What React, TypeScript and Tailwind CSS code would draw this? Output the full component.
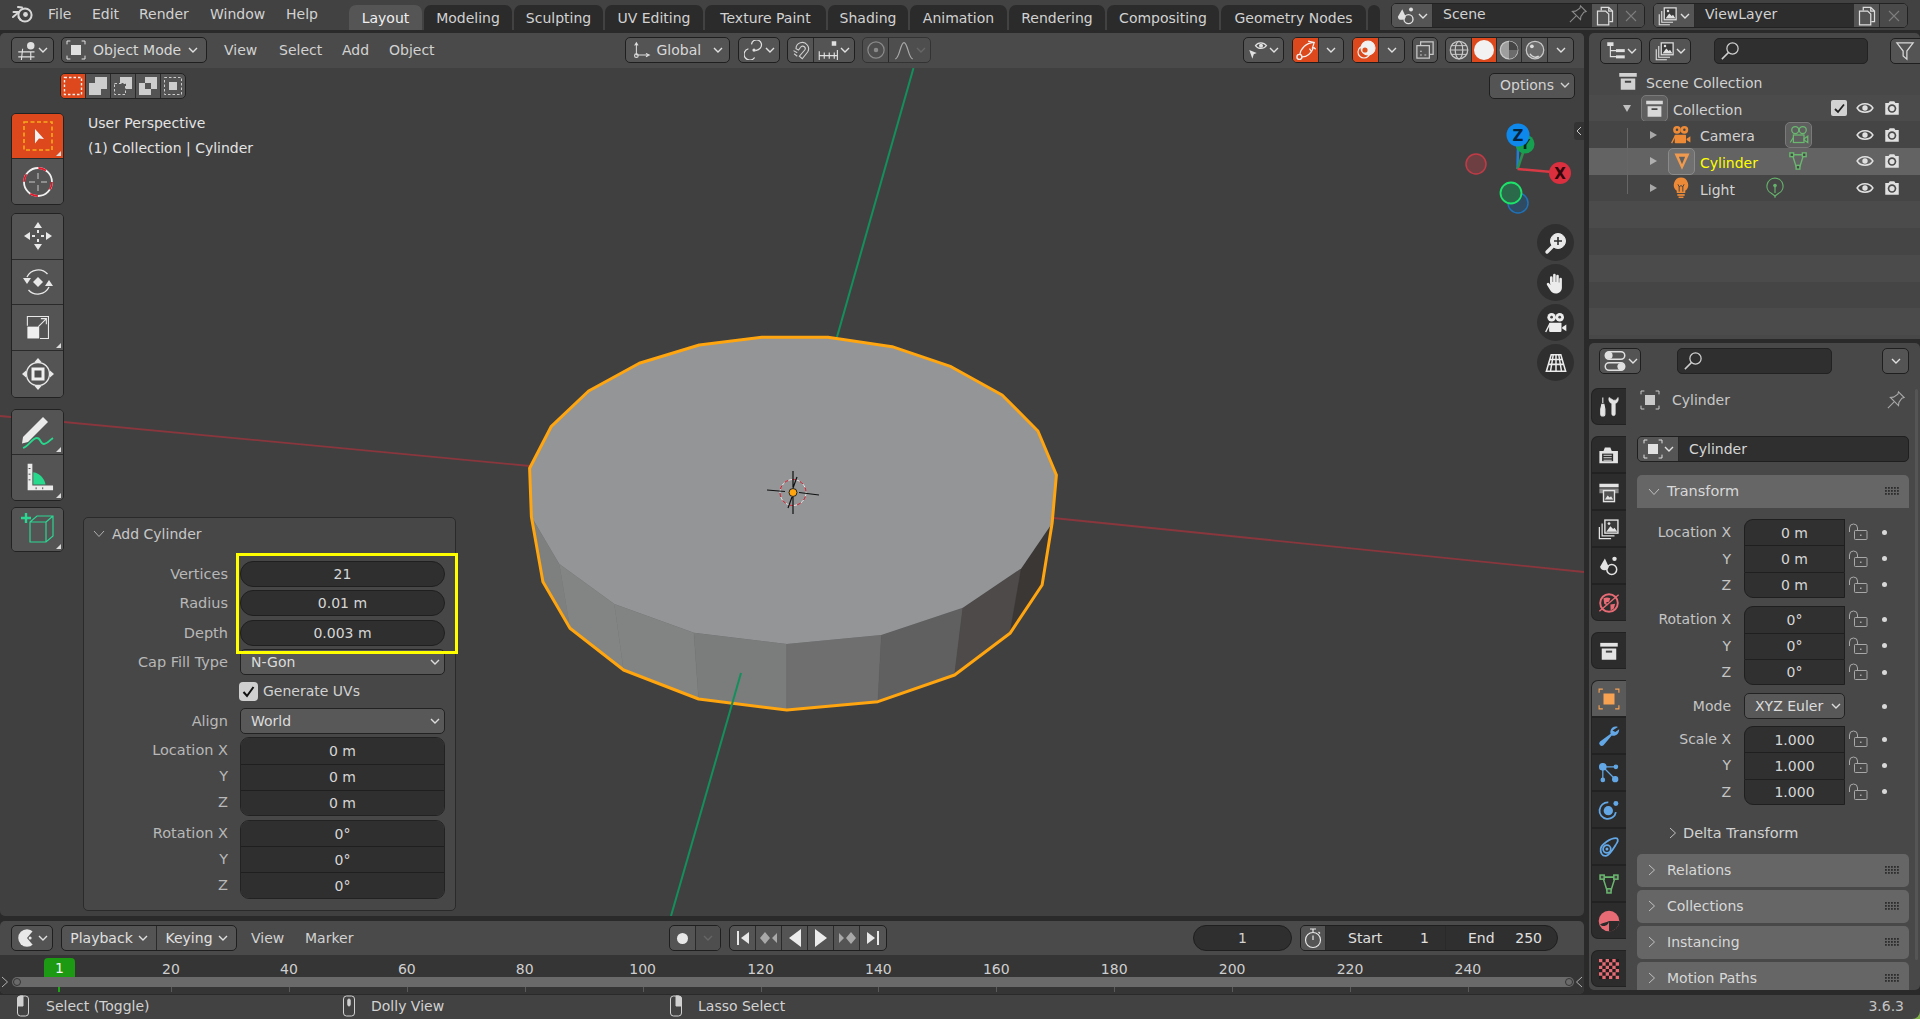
import type { ReactNode } from 'react';
import { twMerge } from 'tailwind-merge';

const cx = (...parts: (string | false | undefined)[]) => twMerge(parts.filter(Boolean).join(' '));

function Svg({ s = 16, v = 16, c, children }: { s?: number; v?: number; c?: string; children: ReactNode }) {
  return (
    <svg width={s} height={s} viewBox={`0 0 ${v} ${v}`} fill="none" stroke="currentColor" strokeWidth={1} className={cx('shrink-0', c)}>
      {children}
    </svg>
  );
}

const Chevron = ({ c }: { c?: string }) => (
  <svg width="10" height="6" viewBox="0 0 10 6" fill="none" stroke="currentColor" strokeWidth={1.4} className={cx('shrink-0', c)}>
    <path d="M1 1l4 4 4-4" />
  </svg>
);

const ChevRight = ({ c }: { c?: string }) => (
  <svg width="8" height="12" viewBox="0 0 8 12" fill="none" stroke="currentColor" strokeWidth={1} className={cx('shrink-0', c)}>
    <path d="M1 1l5.500 5L1 11" />
  </svg>
);

const ChevDown = ({ c }: { c?: string }) => (
  <svg width="12" height="8" viewBox="0 0 12 8" fill="none" stroke="currentColor" strokeWidth={1} className={cx('shrink-0', c)}>
    <path d="M1 1l5 5.500L11 1" />
  </svg>
);

const Logo = () => (
  <svg width="24" height="22" viewBox="0 0 24 22" fill="none" stroke="#d8d8d8" strokeWidth={2}>
    <circle cx="14" cy="12" r="6.600" />
    <circle cx="14.500" cy="11.500" r="2.400" fill="#d8d8d8" stroke="none" />
    <path d="M11 4.500l-4-.5M8 9L2.500 9M8 9l-6 5M7.500 14l2 3" strokeLinecap="round" />
  </svg>
);

const ObjectIcon = ({ s = 18, c }: { s?: number; c?: string }) => (
  <Svg s={s} c={c}>
    <rect x="4" y="4" width="8" height="8" fill="currentColor" stroke="none" />
    <path d="M.8 3.500V.8h2.700M12.500.8h2.700v2.700M15.200 12.500v2.700h-2.700M3.500 15.200H.8v-2.700" strokeWidth={0.8} />
  </Svg>
);

const View3DIcon = () => (
  <Svg s={20}>
    <circle cx="11" cy="4.500" r="3" fill="currentColor" stroke="none" />
    <path d="M1 9.500h13M1 13.500h13M4.500 7l-1 9M11 9v7" strokeWidth={0.9} />
  </Svg>
);

const GlobalIcon = () => (
  <Svg s={18}>
    <path d="M3 2.500v10M3 12.500h10M1.500 4L3 1.500 4.500 4M11.500 11l3 1.500-3 1.500" strokeWidth={0.9} />
    <circle cx="3" cy="13" r="1.600" />
  </Svg>
);

const PivotIcon = () => (
  <Svg s={20}>
    <circle cx="8" cy="8" r="1.300" fill="currentColor" stroke="none" />
    <path d="M3.500 7a4.600 4.600 0 1 0 5 7M6 3.500a4 4 0 1 1 7 3c-1.200 1.600-3 1.800-4 2" strokeWidth={1} />
  </Svg>
);

const MagnetIcon = () => (
  <Svg s={20}>
    <path d="M4 7a5 5 0 0 1 9-3c1.400 1.800 1.300 4 .3 5.600L9 15 6.700 13l4.300-5c.7-.9.4-2-.3-2.600-.9-.8-2.300-.7-3 .4L6 8z" strokeWidth={0.9} />
    <path d="M2 8.500l3 1.700M2.500 11L5 13" strokeWidth={0.9} />
  </Svg>
);

const IncrementIcon = () => (
  <Svg s={20}>
    <rect x="11" y="1" width="3.600" height="3.600" fill="currentColor" stroke="none" />
    <path d="M1 9v7M1 12.500h14.500M5 10v5M9 10v5M13 10v5" strokeWidth={0.9} />
    <path d="M15.500 8v8" strokeWidth={0.9} />
  </Svg>
);

const PropIcon = () => (
  <Svg s={20} c="text-[#8a8a8a]">
    <circle cx="8" cy="8" r="6.500" />
    <circle cx="8" cy="8" r="1.800" fill="currentColor" stroke="none" />
  </Svg>
);

const FalloffIcon = () => (
  <Svg s={20} c="text-[#a8a8a8]">
    <path d="M1 15c3.500 0 4-13 7-13s3.500 13 7 13" />
  </Svg>
);

const SelectableIcon = () => (
  <Svg s={20}>
    <path d="M6 4.500c2-3 6.500-3 8.800 0-2.300 3-6.800 3-8.800 0z" />
    <circle cx="10.400" cy="4.500" r="1.600" fill="currentColor" stroke="none" />
    <path d="M1 8l6 2.300-2.400 1L3.500 15z" fill="currentColor" stroke="none" />
  </Svg>
);

const GizmoToggleIcon = () => (
  <Svg s={22}>
    <path d="M3.500 11.500C4 7 8 3 13.500 2.500M9.500 1.500l4.500 1L12.500 7M5 13c3.500.2 7-2.500 8.500-7" strokeWidth={0.9} />
    <circle cx="3.200" cy="13" r="1.800" strokeWidth={1} />
    <path d="M13.500 6l1.500 1.500M12 9l-1.500-2" strokeWidth={0.9} />
  </Svg>
);

const OverlayIcon = () => (
  <svg width="22" height="22" viewBox="0 0 22 22" fill="none" stroke="#f0f0f0" strokeWidth={1.200}>
    <circle cx="13" cy="9" r="7" fill="#f0f0f0" />
    <circle cx="10" cy="11" r="2.600" fill="#e04f1a" stroke="none" />
    <circle cx="9" cy="13" r="6" />
  </svg>
);

const XRayIcon = () => (
  <Svg s={20} c="text-[#c8c8c8]">
    <rect x="1.500" y="4.500" width="10" height="10" />
    <path d="M4.500 4.500V1.500h10v10h-3" />
    <path d="M4 9h1.500M4 12h1.500M7.500 12H9" strokeWidth={0.900} />
  </Svg>
);

const WireIcon = () => (
  <Svg s={20} c="text-[#c8c8c8]">
    <circle cx="8" cy="8" r="7" />
    <ellipse cx="8" cy="8" rx="3" ry="7" />
    <path d="M1 8h14M2 4.500h12M2 11.500h12" strokeWidth={0.800} />
  </Svg>
);

const MaterialIcon = () => (
  <Svg s={20} c="text-[#c8c8c8]">
    <circle cx="8" cy="8" r="7" fill="#9e9e9e" />
    <path d="M8 1a7 7 0 0 1 7 7H8z" fill="#454545" stroke="none" />
    <path d="M8 8v7a7 7 0 0 0 7-7z" fill="#6c6c6c" stroke="none" />
  </Svg>
);

const RenderedIcon = () => (
  <Svg s={20} c="text-[#c8c8c8]">
    <circle cx="8" cy="8" r="7" fill="#6a6a6a" />
    <path d="M4 11a5 5 0 0 0 7 2" stroke="#d8d8d8" strokeWidth={1.200} />
    <circle cx="5.500" cy="5" r="1.500" fill="#dcdcdc" stroke="none" />
  </Svg>
);

const SearchIcon = () => (
  <Svg s={20} c="text-[#d0d0d0]">
    <circle cx="10" cy="6" r="4.500" />
    <path d="M6.700 9.300L1.500 14.500" strokeWidth={1.200} />
  </Svg>
);

const SceneIcon = ({ s = 22, c }: { s?: number; c?: string }) => (
  <Svg s={s} c={c}>
    <path d="M5 2.500L7.800 8.500A3 3 0 0 1 5 11 3 3 0 0 1 1.500 8.500z" fill="currentColor" stroke="none" />
    <circle cx="12" cy="2.800" r="1.600" fill="currentColor" stroke="none" />
    <circle cx="10" cy="10.500" r="3.600" strokeWidth={1.100} />
  </Svg>
);

const ViewLayerIcon = ({ s = 22, c }: { s?: number; c?: string }) => (
  <Svg s={s} c={c}>
    <rect x="5" y="1.500" width="9.500" height="9.500" fill="#3a3a3a" />
    <path d="M6 10l3-4 2 2 1-1 2 3z" fill="currentColor" stroke="none" />
    <circle cx="8" cy="4" r="1" fill="currentColor" stroke="none" />
    <path d="M3 4v9h9M1 6.500V15h8.500" strokeWidth={0.900} />
  </Svg>
);

const CopyIcon = () => (
  <Svg s={20} c="text-[#dcdcdc]">
    <path d="M5 3.500V1h6l3 3v8.500h-2.500M11 1v3h3" strokeWidth={1} />
    <path d="M2 4h6.500L11 6.500V15H2z" strokeWidth={1} />
  </Svg>
);

const CloseIcon = () => (
  <svg width="12" height="12" viewBox="0 0 12 12" stroke="#7d7d7d" strokeWidth={1.100}>
    <path d="M1 1l10 10M11 1L1 11" />
  </svg>
);

const PinIcon = ({ c }: { c?: string }) => (
  <Svg s={20} c={c}>
    <path d="M10 1.500l4.500 4.500-1.800.5-2.400 3.500L10 12.500 3.500 6l2.500-.3L9.500 3.300z" strokeWidth={0.900} />
    <path d="M6.500 9.500L1.500 14.500" strokeWidth={0.900} />
  </Svg>
);

const OutlinerTypeIcon = () => (
  <Svg s={20}>
    <rect x="1" y="1" width="5" height="3" fill="currentColor" stroke="none" />
    <rect x="8" y="6.500" width="7" height="2.400" fill="currentColor" stroke="none" />
    <rect x="8" y="11.500" width="7" height="2.400" fill="currentColor" stroke="none" />
    <path d="M3.500 4v8.500H8M3.500 7.700H8" strokeWidth={0.900} />
  </Svg>
);

const FilterIcon = () => (
  <Svg s={20} c="text-[#d8d8d8]">
    <path d="M1.500 1.500h13L9.500 8v6.500L6.500 12V8z" />
  </Svg>
);

const PropsTypeIcon = () => (
  <Svg s={24}>
    <rect x="1.500" y="1.800" width="13" height="5" rx="2.500" />
    <circle cx="4" cy="4.300" r="2.400" fill="currentColor" stroke="none" />
    <rect x="1.500" y="9.200" width="13" height="5" rx="2.500" />
    <circle cx="12" cy="11.700" r="2.400" fill="currentColor" stroke="none" />
  </Svg>
);

const BoxIcon = ({ s = 20, c }: { s?: number; c?: string }) => (
  <Svg s={s} c={c}>
    <path d="M1 1.500h14v3H1z" fill="currentColor" stroke="none" />
    <path d="M2.200 6h11.600v9H2.200z" fill="currentColor" stroke="none" />
    <path d="M5.500 8.500h5" stroke="#444" strokeWidth={1.600} />
  </Svg>
);

const CameraFigure = ({ color, s = 22 }: { color: string; s?: number }) => (
  <svg width={s} height={s} viewBox="0 0 16 16" fill={color} className="shrink-0">
    <circle cx="4.800" cy="3.800" r="3.100" />
    <circle cx="10.700" cy="3.800" r="3.100" />
    <circle cx="4.800" cy="3.800" r="1" fill="#444" />
    <circle cx="10.700" cy="3.800" r="1" fill="#444" />
    <rect x="3" y="7.800" width="9" height="6.700" rx="0.600" />
    <path d="M12.500 11l3-2v5l-3-2z" />
    <path d="M3.500 8.500L.5 14.500" stroke={color} fill="none" />
  </svg>
);

const CylinderGlyph = ({ color }: { color: string }) => (
  <svg width="20" height="20" viewBox="0 0 16 16" fill={color} className="shrink-0">
    <path d="M2 2h12L8 15z" />
    <path d="M5.500 4.500h5L8 10.500z" fill="#5f5f5f" />
  </svg>
);

const MeshData = ({ color = '#6ab86f', s = 20 }: { color?: string; s?: number }) => (
  <Svg s={s}>
    <g stroke={color} strokeWidth={1.100}>
      <path d="M3.500 3h9L9.500 12.500h-3z" />
      <rect x="1.500" y="1.500" width="3" height="3" fill="#444" />
      <rect x="11.500" y="1.500" width="3" height="3" fill="#444" />
      <rect x="6.500" y="11.500" width="3" height="3" fill="#444" />
    </g>
  </Svg>
);

const Bulb = () => (
  <svg width="20" height="22" viewBox="0 0 16 18" fill="#ec8a37" className="shrink-0">
    <path d="M8 .5a6 6 0 0 1 3.500 10.800V13h-7v-1.700A6 6 0 0 1 8 .5z" />
    <rect x="5" y="14" width="6" height="1.400" />
    <rect x="6" y="16" width="4" height="1.200" />
    <path d="M5.500 6l1 2 1.500-1 1.500 1 1-2M6.500 8v4M9.500 8v4" stroke="#444" fill="none" strokeWidth={0.800} />
  </svg>
);

const LightData = () => (
  <svg width="20" height="22" viewBox="0 0 16 18" fill="none" stroke="#65b06b" strokeWidth={1} className="shrink-0">
    <path d="M8 1a6.500 6.500 0 0 1 3 12.300L8 15.500l-3-2.200A6.500 6.500 0 0 1 8 1z" />
    <circle cx="8" cy="7" r="1.500" fill="#65b06b" stroke="none" />
    <path d="M8 8v5M8 15.500V17" />
  </svg>
);

const Eye = () => (
  <Svg s={18} c="text-[#e0e0e0]">
    <path d="M1 8c3-5 11-5 14 0-3 5-11 5-14 0z" strokeWidth={1.300} />
    <circle cx="8" cy="8" r="2.400" fill="currentColor" stroke="none" />
  </Svg>
);

const RenderCam = () => (
  <Svg s={18} c="text-[#e0e0e0]">
    <path d="M2 3.500h3L6 2h4l1 1.500h3v10.500H2z" fill="currentColor" stroke="none" />
    <circle cx="8" cy="8.500" r="3.800" fill="#4a4a4a" stroke="none" />
    <circle cx="8" cy="8.500" r="2.300" fill="currentColor" stroke="none" />
  </Svg>
);

const Lock = () => (
  <svg width="20" height="18" viewBox="0 0 20 18" fill="none" stroke="#a8a8a8" strokeWidth={1} className="shrink-0">
    <path d="M1.500 9V5a4 4 0 0 1 8 0v2" />
    <rect x="6.500" y="7.500" width="12.500" height="9" rx="0.800" />
    <rect x="12" y="11.500" width="1.500" height="1.500" fill="#a8a8a8" stroke="none" />
  </svg>
);

const Grip = () => (
  <svg width="15" height="9" viewBox="0 0 15 9" fill="#2d2d2d" className="shrink-0">
    {[0, 3, 6].map((y) => [0, 3, 6, 9, 12].map((x) => <rect key={`${x}-${y}`} x={x} y={y} width="1.800" height="1.800" />))}
  </svg>
);

const Dot = () => <span className="block h-[5px] w-[5px] shrink-0 rounded-full bg-[#d8d8d8]" />;

const Mouse = ({ zone }: { zone: 'left' | 'middle' | 'right' }) => (
  <svg width="16" height="22" viewBox="0 0 16 22" fill="none" stroke="#d0d0d0" strokeWidth={1} className="shrink-0">
    <rect x="2.500" y="1" width="11" height="20" rx="3" />
    {zone === 'left' && <path d="M2.500 11V4a3 3 0 0 1 3-3H8v10z" fill="#d0d0d0" />}
    {zone === 'right' && <path d="M13.500 11V4a3 3 0 0 0-3-3H8v10z" fill="#d0d0d0" />}
    {zone === 'middle' && <rect x="6.800" y="4" width="2.400" height="7" rx="1.200" fill="#d0d0d0" />}
  </svg>
);

const Tri = () => <span className="absolute bottom-[2px] right-[2px] h-0 w-0 border-b-[5px] border-l-[5px] border-b-[#dcdcdc] border-l-transparent" />;

const ToolSelect = () => (
  <svg width="32" height="32" viewBox="0 0 32 32" fill="none">
    <rect x="2" y="2" width="28" height="28" stroke="#f5a91e" strokeWidth={1.600} strokeDasharray="4 2.500" />
    <path d="M13 9l9 10-5-.5-4 5z" fill="#f2f2f2" />
  </svg>
);

const ToolCursor = () => (
  <svg width="32" height="32" viewBox="0 0 32 32" fill="none">
    <circle cx="16" cy="16" r="14" stroke="#f0f0f0" strokeWidth={1.800} />
    <circle cx="16" cy="16" r="14" stroke="#e01a2c" strokeWidth={1.800} strokeDasharray="8 14" />
    <path d="M16 7v6M16 19v6M7 16h6M19 16h6" stroke="#c8c8c8" strokeWidth={1} />
  </svg>
);

const ToolMove = () => (
  <svg width="32" height="32" viewBox="0 0 32 32" fill="#e8e8e8">
    <path d="M16 2l4 6h-8zM16 30l4-6h-8zM2 16l6-4v8zM30 16l-6-4v8z" />
    <path d="M15 10h2v3h-2zM15 19h2v3h-2zM10 15h3v2h-3zM19 15h3v2h-3z" />
  </svg>
);

const ToolRotate = () => (
  <svg width="32" height="32" viewBox="0 0 32 32" fill="#e8e8e8" stroke="none">
    <path d="M16 11l5 5-5 5-5-5z" />
    <path d="M5 18l-4-6h8zM27 14l4 6h-8z" />
    <path d="M5 11A12.500 12.500 0 0 1 25.500 8M27 21A12.500 12.500 0 0 1 6.500 24" fill="none" stroke="#e8e8e8" strokeWidth={1.300} />
  </svg>
);

const ToolScale = () => (
  <svg width="27" height="27" viewBox="0 0 32 32" fill="none" stroke="#e8e8e8" strokeWidth={1.300}>
    <rect x="4" y="15" width="14" height="14" fill="#f0f0f0" stroke="none" />
    <path d="M4 14V3h25v26H19" />
    <path d="M17 15l9-9M20 5.500h6.500V12" />
  </svg>
);

const ToolTransform = () => (
  <svg width="32" height="32" viewBox="0 0 32 32" fill="none" stroke="#e8e8e8" strokeWidth={1.400}>
    <circle cx="16" cy="16" r="11.500" />
    <rect x="9.500" y="9.500" width="13" height="13" fill="#f0f0f0" stroke="none" />
    <rect x="12.500" y="12.500" width="7" height="7" fill="#4f4f4f" stroke="none" />
    <path d="M16 0l3.500 4h-7zM16 32l3.500-4h-7zM0 16l4-3.500v7zM32 16l-4-3.500v7z" fill="#e8e8e8" stroke="none" />
  </svg>
);

const ToolAnnotate = () => (
  <svg width="38" height="38" viewBox="0 0 38 38" fill="none">
    <path d="M4 24L24 4l5 5L9 29l-6 1.500z" fill="#eaeaea" />
    <path d="M4 35c6-2 9-10 14-10 4 0 3 6 7 6 3 0 6-4 9-6" stroke="#26d98d" strokeWidth={1.800} />
  </svg>
);

const ToolMeasure = () => (
  <svg width="32" height="34" viewBox="0 0 34 34" fill="none">
    <path d="M6 3h5v23h22v5H6z" fill="#eaeaea" />
    <path d="M12 12c7 1 12 7 13 13H12z" fill="#26d98d" />
    <path d="M7 8h2M7 14h2M7 20h2M15 28v2M22 28v2" stroke="#444" strokeWidth={1} />
  </svg>
);

const ToolAddCube = () => (
  <svg width="34" height="34" viewBox="0 0 34 34" fill="none" stroke="#2bd693" strokeWidth={1.200}>
    <path d="M5 1v10M0 6h10" strokeWidth={2.400} />
    <path d="M9 10l7-6h16v20l-7 6H9zM9 10h16v20M25 10l7-6" />
  </svg>
);

const TabTool = () => (
  <Svg s={22} c="text-[#e4e4e4]">
    <path d="M3.500 1v4M2 9.500L2.800 6h1.500L5 9.500V13a1.500 1.500 0 0 1-3 0z" fill="currentColor" strokeWidth={0.800} />
    <path d="M9 1c-.6 2 .4 4 2 4.500V13a1.300 1.300 0 0 0 2.600 0V5.500c1.600-.5 2.600-2.500 2-4.500l-1.600 2h-1.700z" fill="currentColor" strokeWidth={0.400} transform="translate(-1 0)" />
  </Svg>
);

const TabRender = () => (
  <Svg s={22} c="text-[#e4e4e4]">
    <path d="M1 5h3l1-2.500h4L10 5h4.500v9H1z" fill="currentColor" stroke="none" />
    <rect x="3" y="7" width="8" height="5.500" fill="#2d2d2d" stroke="none" />
    <path d="M4 8.200h6M4 10h6M4 11.800h6" strokeWidth={0.700} />
  </Svg>
);

const TabOutput = () => (
  <Svg s={22} c="text-[#e4e4e4]">
    <rect x="1" y="2" width="14" height="2.600" fill="currentColor" stroke="none" />
    <rect x="1" y="5.400" width="14" height="3.500" fill="#8a8a8a" stroke="none" />
    <rect x="4" y="7" width="8" height="8" fill="#555" stroke="currentColor" />
    <path d="M5 13.500l2-3 1.500 1.500 1-1 1.500 2.500z" fill="currentColor" stroke="none" />
  </Svg>
);

const TabWorld = () => (
  <Svg s={22} c="text-[#e66b74]">
    <circle cx="8" cy="8" r="6.400" fill="none" strokeWidth={1.400} />
    <path d="M4 4.500c2-.8 3.500-.5 5 0l-1 2.500-2 .5.800 2.500-2.300-1.500zM9 9l3.500-.5-1 3.500-2.300 1.500z" fill="currentColor" stroke="none" />
    <path d="M1 14L15 2" strokeWidth={1} />
  </Svg>
);

const TabModifier = () => (
  <svg width="22" height="22" viewBox="0 0 16 16" fill="#63a7e6" className="shrink-0">
    <path d="M14.500 1.500c-2.500-1-5 .3-5.500 3-.1.700 0 1.300.2 1.800L1.500 12a1.800 1.800 0 0 0 2.500 2.700l6-7c3 .7 5.500-1.500 5.400-4.600l-2.800 2L10.500 4z" />
  </svg>
);

const TabParticles = () => (
  <svg width="22" height="22" viewBox="0 0 16 16" fill="#63a7e6" stroke="#63a7e6" className="shrink-0">
    <circle cx="3.500" cy="3.500" r="2.300" />
    <circle cx="13" cy="3.500" r="1.200" />
    <circle cx="3.500" cy="13" r="1.200" />
    <circle cx="12.500" cy="12.500" r="1.800" />
    <path d="M3.500 3.500H13M3.500 3.500V13M3.500 3.500l9 9" fill="none" strokeWidth={0.900} />
  </svg>
);

const TabPhysics = () => (
  <svg width="22" height="22" viewBox="0 0 16 16" fill="none" stroke="#63a7e6" strokeWidth={1.200} className="shrink-0">
    <path d="M13 9.500a6 6 0 1 1-5.500-7" strokeWidth={1.300} />
    <circle cx="7.500" cy="8.500" r="3.400" fill="#63a7e6" stroke="none" />
    <circle cx="13" cy="3.200" r="1.800" fill="#63a7e6" stroke="none" />
  </svg>
);

const TabConstraint = () => (
  <svg width="22" height="22" viewBox="0 0 16 16" fill="none" stroke="#63a7e6" strokeWidth={1.300} className="shrink-0">
    <path d="M2 9c.5-3 7-7.500 11-7.500 1.600 0 1.800 2 .8 3.500-2 3-5 9-8 9.500C3 14.800 1.500 12 2 9z" />
    <circle cx="6.500" cy="9.500" r="2.800" />
    <circle cx="6.500" cy="9.500" r="1.100" fill="#63a7e6" stroke="none" />
  </svg>
);

const TabMaterial = () => (
  <svg width="22" height="22" viewBox="0 0 16 16" className="shrink-0">
    <circle cx="8" cy="8" r="7.500" fill="#e66b74" />
    <path d="M8 8h7.500A7.500 7.500 0 0 1 8 15.500z" fill="#2a2a2a" />
    <path d="M1.500 10.500C4 13 8 11 8 8 6 9 3 9.500 1.500 10.500z" fill="#2a2a2a" />
  </svg>
);

const TabTexture = () => (
  <svg width="20" height="20" viewBox="0 0 6 6" className="shrink-0">
    <rect width="6" height="6" fill="#e66b74" />
    <path d="M1 0h1v1H1zM3 0h1v1H3zM5 0h1v1H5zM0 1h1v1H0zM2 1h1v1H2zM4 1h1v1H4zM1 2h1v1H1zM3 2h1v1H3zM5 2h1v1H5zM0 3h1v1H0zM2 3h1v1H2zM4 3h1v1H4zM1 4h1v1H1zM3 4h1v1H3zM5 4h1v1H5zM0 5h1v1H0zM2 5h1v1H2zM4 5h1v1H4z" fill="#1d1d1d" />
  </svg>
);

function Box({ c, children }: { c: string; children?: ReactNode }) {
  return <div className={cx('flex h-[26px] shrink-0 items-stretch overflow-hidden rounded-[5px] border border-[#1f1f1f] bg-[#545454] text-[#e0e0e0]', c)}>{children}</div>;
}

function Seg({ c, children }: { c?: string; children?: ReactNode }) {
  return <div className={cx('flex items-center justify-center border-r border-[#2a2a2a] last:border-r-0', c)}>{children}</div>;
}

function TopBar() {
  const tabs = [
    { label: 'Layout', w: 'w-[73px]', active: true },
    { label: 'Modeling', w: 'w-[88px]' },
    { label: 'Sculpting', w: 'w-[89px]' },
    { label: 'UV Editing', w: 'w-[98px]' },
    { label: 'Texture Paint', w: 'w-[121px]' },
    { label: 'Shading', w: 'w-[80px]' },
    { label: 'Animation', w: 'w-[97px]' },
    { label: 'Rendering', w: 'w-[96px]' },
    { label: 'Compositing', w: 'w-[112px]' },
    { label: 'Geometry Nodes', w: 'w-[145px]' },
    { label: '', w: 'w-[12px]' },
  ];
  return (
    <div className="flex h-[30px] shrink-0 bg-[#424242]">
      <div className="flex h-[28px] w-[48px] items-center pl-[11px]">
        <Logo />
      </div>
      <div className="flex h-[28px] w-[44px] items-center">File</div>
      <div className="flex h-[28px] w-[47px] items-center">Edit</div>
      <div className="flex h-[28px] w-[71px] items-center">Render</div>
      <div className="flex h-[28px] w-[76px] items-center">Window</div>
      <div className="flex h-[28px] w-[63px] items-center">Help</div>
      <div className="flex items-end gap-[2px]">
        {tabs.map((t, i) => (
          <div
            key={i}
            className={cx(
              'flex h-[25px] items-center justify-center overflow-hidden rounded-t-[7px]',
              t.w,
              t.active ? 'bg-[#555555] text-[#f0f0f0]' : 'bg-[#2b2b2b] text-[#d2d2d2]',
            )}
          >
            {t.label}
          </div>
        ))}
      </div>
      <Box c="ml-[11px] mt-[3px] h-[25px] w-[254px] border-[#222222]">
        <Seg c="w-[41px] gap-[2px] bg-[#555555]">
          <SceneIcon s={20} />
          <Chevron />
        </Seg>
        <div className="flex flex-1 items-center justify-between bg-[#2d2d2d] pb-[3px] pl-[10px] pr-[4px] text-[#d2d2d2]">
          Scene
          <PinIcon c="text-[#8a8a8a]" />
        </div>
        <Seg c="w-[26px]">
          <CopyIcon />
        </Seg>
        <Seg c="w-[26px] bg-[#4a4a4a]">
          <CloseIcon />
        </Seg>
      </Box>
      <Box c="ml-[8px] mt-[3px] h-[25px] w-[255px] border-[#222222]">
        <Seg c="w-[41px] gap-[2px] bg-[#555555]">
          <ViewLayerIcon s={20} />
          <Chevron />
        </Seg>
        <div className="flex flex-1 items-center bg-[#2d2d2d] pb-[3px] pl-[10px] text-[#d2d2d2]">ViewLayer</div>
        <Seg c="w-[26px]">
          <CopyIcon />
        </Seg>
        <Seg c="w-[27px] bg-[#4a4a4a]">
          <CloseIcon />
        </Seg>
      </Box>
    </div>
  );
}

function SceneDrawing() {
  const outline =
    '529.6,468.3 551.1,426.7 588.6,391 639.3,363.3 699.3,345 761.8,337.3 827.9,337.3 892.1,346.7 951.1,366.7 1002.1,395 1037.9,431 1056.4,475 1052.1,523.3 1042.1,585 1010,633.3 954.6,675 877.9,701.7 786.8,710 698.6,699 623.6,670 570,628.3 542.9,581.7 531.4,516.7';
  const top =
    '529.6,468.3 551.1,426.7 588.6,391 639.3,363.3 699.3,345 761.8,337.3 827.9,337.3 892.1,346.7 951.1,366.7 1002.1,395 1037.9,431 1056.4,475 1052.1,523.3 1021.4,568.3 962.9,607.7 881.4,635 786.8,644 693.9,632.7 614.3,604 559.3,564 531.4,516.7';
  const sides: [string, string][] = [
    ['531.4,516.7 559.3,564 570,628.3 542.9,581.7', '#7d807f'],
    ['559.3,564 614.3,604 623.6,670 570,628.3', '#838584'],
    ['614.3,604 693.9,632.7 698.6,699 623.6,670', '#828483'],
    ['693.9,632.7 786.8,644 786.8,710 698.6,699', '#7b7d7c'],
    ['786.8,644 881.4,635 877.9,701.7 786.8,710', '#6f6f6f'],
    ['881.4,635 962.9,607.7 954.6,675 877.9,701.7', '#606060'],
    ['962.9,607.7 1021.4,568.3 1010,633.3 954.6,675', '#4d4a49'],
    ['1021.4,568.3 1052.1,523.3 1042.1,585 1010,633.3', '#3b3735'],
  ];
  return (
    <svg width="1584" height="883" viewBox="0 33 1584 883" className="absolute inset-0">
      <line x1="913.5" y1="68" x2="837" y2="337" stroke="#12905c" strokeWidth="2" />
      <line x1="0" y1="416" x2="530" y2="466" stroke="#8a363d" strokeWidth="1.800" />
      <line x1="1053" y1="518" x2="1584" y2="572" stroke="#8a363d" strokeWidth="1.800" />
      {sides.map(([p, f]) => (
        <polygon key={p} points={p} fill={f} stroke={f} strokeWidth="0.500" />
      ))}
      <polygon points={top} fill="#939597" />
      <polygon points={outline} fill="none" stroke="#ffa50f" strokeWidth="3" strokeLinejoin="round" />
      <line x1="741" y1="673" x2="671" y2="916" stroke="#12905c" strokeWidth="2" />

      <circle cx="793" cy="492.500" r="13" fill="none" stroke="#e8e8e8" strokeWidth="1" strokeDasharray="4 4" />
      <circle cx="793" cy="492.500" r="13" fill="none" stroke="#e01a2c" strokeWidth="1" strokeDasharray="4 4" strokeDashoffset="4" />
      <g stroke="#111" strokeWidth="1.200">
        <path d="M767 490l18 1.500M799 492.500l20 2.500M793 471v16M793 497v17M797 477l-4 11M792 497l-4 11" />
      </g>
      <circle cx="793" cy="492.500" r="4" fill="#ffa50f" stroke="#222" strokeWidth="1" />

      <line x1="1517.500" y1="169" x2="1518" y2="146" stroke="#1f7fd6" strokeWidth="2.500" />
      <line x1="1517.500" y1="169" x2="1524" y2="150" stroke="#2d8f4e" strokeWidth="2.500" />
      <line x1="1517.500" y1="169" x2="1552" y2="172" stroke="#d73a45" strokeWidth="2.500" />
      <circle cx="1476" cy="164" r="10" fill="#6e3f42" stroke="#c03b46" strokeWidth="1.500" />
      <circle cx="1518" cy="203" r="10" fill="#2f4a63" stroke="#1f71b8" strokeWidth="1.500" />
      <circle cx="1511" cy="193" r="10.500" fill="#2a6a4a" stroke="#1de36a" strokeWidth="1.800" />
      <circle cx="1525" cy="144" r="9.500" fill="#16a04f" />
      <text x="1525" y="149" textAnchor="middle" fontSize="14" fontWeight="700" fill="#0b2b18">Y</text>
      <circle cx="1518" cy="135" r="11.500" fill="#0e88ea" />
      <text x="1518" y="140.500" textAnchor="middle" fontSize="15" fontWeight="700" fill="#06233c">Z</text>
      <circle cx="1560" cy="173" r="11" fill="#d92f3e" />
      <text x="1560" y="178.500" textAnchor="middle" fontSize="15" fontWeight="700" fill="#30080c">X</text>
    </svg>
  );
}

function ToolBtn({ active, corner, c, children }: { active?: boolean; corner?: boolean; c?: string; children: ReactNode }) {
  return (
    <div className={cx('relative flex h-[45px] items-center justify-center border-b border-[#2a2a2a] last:border-b-0', active ? 'bg-[#dd491c]' : 'bg-[#545454]', c)}>
      {children}
      {corner && <Tri />}
    </div>
  );
}

function ToolGroup({ c, children }: { c?: string; children: ReactNode }) {
  return <div className={cx('overflow-hidden rounded-[5px] border border-[#222222]', c)}>{children}</div>;
}

function Toolbar() {
  return (
    <div className="absolute left-[11px] top-[80px] flex w-[53px] flex-col">
      <ToolGroup>
        <ToolBtn active corner>
          <ToolSelect />
        </ToolBtn>
        <ToolBtn>
          <ToolCursor />
        </ToolBtn>
      </ToolGroup>
      <ToolGroup c="mt-[8px]">
        <ToolBtn c="h-[45.700px]">
          <ToolMove />
        </ToolBtn>
        <ToolBtn c="h-[45.700px]">
          <ToolRotate />
        </ToolBtn>
        <ToolBtn corner c="h-[45.700px]">
          <ToolScale />
        </ToolBtn>
        <ToolBtn c="h-[45.700px]">
          <ToolTransform />
        </ToolBtn>
      </ToolGroup>
      <ToolGroup c="mt-[11px]">
        <ToolBtn corner>
          <ToolAnnotate />
        </ToolBtn>
        <ToolBtn corner>
          <ToolMeasure />
        </ToolBtn>
      </ToolGroup>
      <ToolGroup c="mt-[6px]">
        <ToolBtn corner c="h-[43px]">
          <ToolAddCube />
        </ToolBtn>
      </ToolGroup>
    </div>
  );
}

function SelectionModes() {
  const solid = '#cdcdcd';
  return (
    <div className="absolute left-[60px] top-[40px] flex h-[26px] w-[126px] overflow-hidden rounded-[5px] border border-[#222222] bg-[#545454]">
      <Seg c="w-[25px] bg-[#dd491c]">
        <svg width="20" height="20" viewBox="0 0 20 20" fill="none">
          <rect x="1.500" y="1.500" width="17" height="17" stroke="#f2f2f2" strokeWidth="1.400" strokeDasharray="2.500 2" />
        </svg>
      </Seg>
      <Seg c="w-[25px]">
        <svg width="20" height="20" viewBox="0 0 20 20" fill={solid}>
          <path d="M1 7h6V1h12v12h-6v6H1z" />
        </svg>
      </Seg>
      <Seg c="w-[25px]">
        <svg width="20" height="20" viewBox="0 0 20 20" fill={solid}>
          <path d="M7 1h12v12h-6V7H7z" />
          <rect x="1.500" y="7.500" width="11" height="11" fill="none" stroke={solid} strokeWidth="1" strokeDasharray="2.500 2" />
        </svg>
      </Seg>
      <Seg c="w-[25px]">
        <svg width="20" height="20" viewBox="0 0 20 20" fill={solid}>
          <path d="M7 1h12v12h-6V7H7zM1 7h6v6h6v6H1z" />
        </svg>
      </Seg>
      <Seg c="flex-1">
        <svg width="20" height="20" viewBox="0 0 20 20" fill={solid}>
          <rect x="1.500" y="1.500" width="17" height="17" fill="none" stroke={solid} strokeWidth="1" strokeDasharray="2.500 2" />
          <rect x="6" y="6" width="8" height="8" />
        </svg>
      </Seg>
    </div>
  );
}

function FieldStack({ values }: { values: string[] }) {
  return (
    <div className="flex w-[205px] flex-col overflow-hidden rounded-[9px] border border-[#222222]">
      {values.map((v, i) => (
        <div key={i} className={cx('flex h-[25.700px] items-center justify-center bg-[#2f2f2f] text-[#d6d6d6]', i > 0 && 'border-t border-[#1f1f1f]')}>
          {v}
        </div>
      ))}
    </div>
  );
}

function OpLabel({ children, c }: { children: ReactNode; c?: string }) {
  return <div className={cx('flex h-[26px] w-[144px] items-center justify-end text-[14.500px] text-[#b8b8b8]', c)}>{children}</div>;
}

function OpRow({ label, children }: { label: string; children: ReactNode }) {
  return (
    <div className="flex h-[26px] items-center gap-[12px]">
      <OpLabel>{label}</OpLabel>
      {children}
    </div>
  );
}

function PillField({ value }: { value: string }) {
  return <div className="flex h-[26px] w-[205px] items-center justify-center rounded-full border border-[#1f1f1f] bg-[#2f2f2f] text-[#d6d6d6]">{value}</div>;
}

function SelectField({ value }: { value: string }) {
  return (
    <div className="flex h-[26px] w-[205px] items-center justify-between rounded-[5px] border border-[#222222] bg-[#585858] pl-[10px] pr-[4px] text-[#dcdcdc]">
      {value}
      <Chevron />
    </div>
  );
}

function OperatorPanel() {
  return (
    <div className="absolute left-[83px] top-[484px] flex h-[394px] w-[373px] flex-col rounded-[5px] border border-[#2a2a2a] bg-[#474747]">
      <div className="flex h-[43px] items-center gap-[7px] pb-[12px] pl-[9px] text-[#c8c8c8]">
        <ChevDown c="text-[#b0b0b0]" />
        Add Cylinder
      </div>
      <div className="flex flex-col gap-[3.400px]">
        <OpRow label="Vertices">
          <PillField value="21" />
        </OpRow>
        <OpRow label="Radius">
          <PillField value="0.01 m" />
        </OpRow>
        <OpRow label="Depth">
          <PillField value="0.003 m" />
        </OpRow>
        <OpRow label="Cap Fill Type">
          <SelectField value="N-Gon" />
        </OpRow>
        <div className="flex h-[26px] items-center gap-[5px] pl-[155px] text-[#d2d2d2]">
          <span className="flex h-[19px] w-[19px] items-center justify-center rounded-[4px] bg-[#d0d0d0]">
            <svg width="13" height="13" viewBox="0 0 13 13" fill="none" stroke="#111" strokeWidth="2">
              <path d="M1.500 7l3.500 4 6.500-9" />
            </svg>
          </span>
          <span className="-mt-[2px]">Generate UVs</span>
        </div>
        <OpRow label="Align">
          <SelectField value="World" />
        </OpRow>
        <div className="flex items-start gap-[12px]">
          <div>
            <OpLabel>Location X</OpLabel>
            <OpLabel>Y</OpLabel>
            <OpLabel>Z</OpLabel>
          </div>
          <FieldStack values={['0 m', '0 m', '0 m']} />
        </div>
        <div className="flex items-start gap-[12px]">
          <div>
            <OpLabel>Rotation X</OpLabel>
            <OpLabel>Y</OpLabel>
            <OpLabel>Z</OpLabel>
          </div>
          <FieldStack values={['0°', '0°', '0°']} />
        </div>
      </div>
      <div className="absolute left-[152px] top-[35px] h-[101px] w-[222px] border-[3px] border-[#ffff00]" />
    </div>
  );
}

function Viewport() {
  return (
    <div className="flex h-[883px] flex-col overflow-hidden rounded-[5px] bg-[#404040]">
      <div className="z-10 flex h-[35px] shrink-0 items-center bg-[#4a4a4a] pb-[1px] pl-[11px]">
        <Box c="w-[43px]">
          <Seg c="w-full gap-[1px]">
            <View3DIcon />
            <Chevron />
          </Seg>
        </Box>
        <Box c="ml-[7px] w-[146px]">
          <Seg c="w-full justify-start gap-[7px] pb-[1px] pl-[4px]">
            <ObjectIcon s={20} />
            <span className="text-[#d8d8d8]">Object Mode</span>
            <Chevron />
          </Seg>
        </Box>
        <span className="ml-[17px] w-[55px] pb-[1px]">View</span>
        <span className="w-[63px] pb-[1px]">Select</span>
        <span className="w-[47px] pb-[1px]">Add</span>
        <span className="w-[46px] pb-[1px]">Object</span>
        <Box c="ml-[190px] w-[105px]">
          <Seg c="w-full gap-[6px] pb-[1px]">
            <GlobalIcon />
            <span className="w-[50px] text-[#d8d8d8]">Global</span>
            <Chevron />
          </Seg>
        </Box>
        <Box c="ml-[8px] w-[42px]">
          <Seg c="w-full gap-[1px]">
            <PivotIcon />
            <Chevron />
          </Seg>
        </Box>
        <Box c="ml-[7px] w-[68px]">
          <Seg c="w-[26px] text-[#cfcfcf]">
            <MagnetIcon />
          </Seg>
          <Seg c="flex-1 gap-[2px]">
            <IncrementIcon />
            <Chevron />
          </Seg>
        </Box>
        <Box c="ml-[7px] w-[69px] border-[#333333] bg-[#4e4e4e]">
          <Seg c="w-[26px]">
            <PropIcon />
          </Seg>
          <Seg c="flex-1 gap-[2px] text-[#666666]">
            <FalloffIcon />
            <Chevron />
          </Seg>
        </Box>
        <Box c="ml-[312px] w-[41px]">
          <Seg c="w-full gap-[1px]">
            <SelectableIcon />
            <Chevron />
          </Seg>
        </Box>
        <Box c="ml-[8px] w-[52px]">
          <Seg c="w-[26px] bg-[#dd491c] text-[#f0f0f0]">
            <GizmoToggleIcon />
          </Seg>
          <Seg c="flex-1">
            <Chevron />
          </Seg>
        </Box>
        <Box c="ml-[8px] w-[53px]">
          <Seg c="w-[26px] bg-[#dd491c]">
            <OverlayIcon />
          </Seg>
          <Seg c="flex-1">
            <Chevron />
          </Seg>
        </Box>
        <Box c="ml-[7px] w-[26px]">
          <Seg c="w-full">
            <XRayIcon />
          </Seg>
        </Box>
        <Box c="ml-[7px] w-[129px]">
          <Seg c="w-[26px]">
            <WireIcon />
          </Seg>
          <Seg c="w-[25px] bg-[#dd491c]">
            <span className="h-[20px] w-[20px] rounded-full bg-[#f2f2f2]" />
          </Seg>
          <Seg c="w-[25px]">
            <MaterialIcon />
          </Seg>
          <Seg c="w-[26px]">
            <RenderedIcon />
          </Seg>
          <Seg c="flex-1">
            <Chevron />
          </Seg>
        </Box>
      </div>
      <div className="relative flex-1" />
      <div className="pointer-events-none">
        <div className="absolute left-0 top-[33px] h-[883px] w-[1584px]">
          <SceneDrawing />
          <SelectionModes />
          <Toolbar />
          <div className="absolute left-[88px] top-[83px] text-[#e4e4e4]">User Perspective</div>
          <div className="absolute left-[88px] top-[108px] text-[#e4e4e4]">(1) Collection | Cylinder</div>
          <div className="absolute left-[1489px] top-[40px] flex h-[26px] w-[86px] items-center justify-between rounded-[5px] border border-[#1f1f1f] bg-[#545454] pb-[2px] pl-[10px] pr-[4px]">
            Options
            <Chevron />
          </div>
          <div className="absolute left-[1574px] top-[89px] flex h-[18px] w-[10px] items-center justify-center rounded-l-[3px] bg-[#333333] text-[#c8c8c8]">
            <svg width="6" height="10" viewBox="0 0 6 10" fill="none" stroke="currentColor">
              <path d="M5 1L1 5l4 4" />
            </svg>
          </div>
          <div className="absolute left-[1537px] top-[191px] flex flex-col gap-[3px] text-[#e8e8e8]">
            <div className="flex h-[37px] w-[37px] items-center justify-center rounded-full bg-[#2f2f2f]">
              <svg width="24" height="24" viewBox="0 0 24 24" fill="none" stroke="currentColor">
                <circle cx="14" cy="10" r="7.500" fill="#e8e8e8" />
                <path d="M14 6v8M10 10h8" stroke="#2f2f2f" strokeWidth="1.600" />
                <path d="M8.500 15.500L3 21" strokeWidth="3.400" strokeLinecap="round" />
              </svg>
            </div>
            <div className="flex h-[37px] w-[37px] items-center justify-center rounded-full bg-[#2f2f2f]">
              <svg width="24" height="24" viewBox="0 0 24 24" fill="#ececec">
                <path d="M6 12V6.500a1.300 1.300 0 0 1 2.600 0V11h.5V4a1.300 1.300 0 0 1 2.600 0v7h.5V5a1.300 1.300 0 0 1 2.600 0v6.500h.5V8a1.300 1.300 0 0 1 2.600 0v8.500c0 3.500-2.500 6-6 6-3 0-4.500-1.300-5.800-3.500L3 14c-1-1.800 1.200-3 2.300-1.600L6.500 14z" />
              </svg>
            </div>
            <div className="flex h-[37px] w-[37px] items-center justify-center rounded-full bg-[#2f2f2f]">
              <CameraFigure color="#ececec" />
            </div>
            <div className="flex h-[37px] w-[37px] items-center justify-center rounded-full bg-[#2f2f2f]">
              <svg width="22" height="22" viewBox="0 0 16 16" fill="none" stroke="#ececec" strokeWidth="1.100">
                <path d="M4.500 2h7L15 14H1zM8 2v12M2.500 9h11M3.500 5.500h9M6 2l-2 12M10 2l2 12" />
              </svg>
            </div>
          </div>
          <OperatorPanel />
        </div>
      </div>
    </div>
  );
}

function Timeline() {
  const frames = [20, 40, 60, 80, 100, 120, 140, 160, 180, 200, 220, 240];
  const pos = (f: number) => 59 + (f - 1) * 5.895;
  return (
    <div className="flex h-[73px] flex-col overflow-hidden rounded-[5px] bg-[#4a4a4a]">
      <div className="flex h-[34px] shrink-0 items-center pl-[11px]">
        <Box c="w-[42px]">
          <Seg c="w-full gap-[1px]">
            <svg width="20" height="20" viewBox="0 0 16 16">
              <circle cx="8" cy="8" r="7" fill="#e8e8e8" />
              <path d="M13 2L8 8l5 6 3-3V5z" fill="#545454" />
              <circle cx="10.500" cy="8" r="1.200" fill="#e8e8e8" />
            </svg>
            <Chevron />
          </Seg>
        </Box>
        <Box c="ml-[8px] w-[176px]">
          <Seg c="w-[95px] gap-[5px]">
            Playback
            <Chevron />
          </Seg>
          <Seg c="flex-1 gap-[5px]">
            Keying
            <Chevron />
          </Seg>
        </Box>
        <span className="ml-[14px] w-[54px]">View</span>
        <span className="w-[60px]">Marker</span>
        <Box c="ml-[304px] w-[52px]">
          <Seg c="w-[26px]">
            <span className="h-[11px] w-[11px] rounded-full bg-[#e8e8e8]" />
          </Seg>
          <Seg c="flex-1 bg-[#4e4e4e] text-[#666666]">
            <Chevron />
          </Seg>
        </Box>
        <Box c="ml-[8px] w-[158px]">
          <Seg c="w-[26px]">
            <svg width="14" height="16" viewBox="0 0 14 16" fill="#e8e8e8">
              <rect x="1" y="1" width="2" height="14" />
              <path d="M13 2v12L5 8z" />
            </svg>
          </Seg>
          <Seg c="w-[26px]">
            <svg width="18" height="14" viewBox="0 0 18 14" fill="#a8a8a8">
              <path d="M5 1l5 6-5 6-5-6zM17 2v10l-5-5z" />
            </svg>
          </Seg>
          <Seg c="w-[26px]">
            <svg width="14" height="18" viewBox="0 0 14 18" fill="#ececec">
              <path d="M13 0v18L1 9z" />
            </svg>
          </Seg>
          <Seg c="w-[26px]">
            <svg width="14" height="18" viewBox="0 0 14 18" fill="#ececec">
              <path d="M1 0v18l12-9z" />
            </svg>
          </Seg>
          <Seg c="w-[26px]">
            <svg width="18" height="14" viewBox="0 0 18 14" fill="#a8a8a8">
              <path d="M13 1l5 6-5 6-5-6zM1 2v10l5-5z" />
            </svg>
          </Seg>
          <Seg c="flex-1">
            <svg width="14" height="16" viewBox="0 0 14 16" fill="#e8e8e8">
              <rect x="11" y="1" width="2" height="14" />
              <path d="M1 2v12l8-6z" />
            </svg>
          </Seg>
        </Box>
        <div className="ml-[306px] flex h-[26px] w-[99px] items-center justify-center rounded-full border border-[#1f1f1f] bg-[#2f2f2f]">1</div>
        <Box c="ml-[8px] w-[258px] rounded-l-[5px] rounded-r-[13px] bg-[#2f2f2f]">
          <Seg c="w-[25px] bg-[#545454]">
            <svg width="18" height="22" viewBox="0 0 18 22" fill="none" stroke="#e8e8e8" strokeWidth="1.200">
              <circle cx="9" cy="13" r="7.500" />
              <path d="M6 2h6M9 2v3M9 13V8.500M14.500 5l1.500 1.500" />
            </svg>
          </Seg>
          <Seg c="w-[120px] justify-between pl-[22px] pr-[16px]">
            <span>Start</span>
            <span>1</span>
          </Seg>
          <Seg c="flex-1 justify-between pl-[22px] pr-[15px]">
            <span>End</span>
            <span>250</span>
          </Seg>
        </Box>
      </div>
      <div className="relative flex-1 bg-[#353535]">
        {frames.map((f) => (
          <span key={f} className="absolute top-[7px] -translate-x-1/2 text-[#cfcfcf]" style={{ left: pos(f) }}>
            {f}
          </span>
        ))}
        {frames.map((f) => (
          <span key={f} className="absolute top-[32px] h-[5px] w-px bg-[#5a5a5a]" style={{ left: pos(f) }} />
        ))}
        <div className="absolute left-[44px] top-[3px] flex h-[20px] w-[31px] items-center justify-center rounded-t-[4px] bg-[#1c9a14] text-[#f4f4f4]">1</div>
        <span className="absolute left-[58px] top-[32px] h-[5px] w-[2px] bg-[#1ca814]" />
        <div className="absolute left-[12px] top-[22px] flex h-[10px] w-[1562px] items-center justify-between rounded-full bg-[#6a6a6a] px-[1px]">
          <span className="h-[8px] w-[8px] rounded-full border border-[#353535]" />
          <span className="h-[8px] w-[8px] rounded-full border border-[#353535]" />
        </div>
        <ChevRight c="absolute left-[1px] top-[21px] text-[#b0b0b0]" />
        <ChevRight c="absolute right-[1px] top-[21px] rotate-180 text-[#b0b0b0]" />
      </div>
    </div>
  );
}

function OutRow({ shade, c, children }: { shade: 'a' | 'b' | 'sel'; c?: string; children?: ReactNode }) {
  return (
    <div className={cx('flex h-[26.700px] shrink-0 items-center', shade === 'a' && 'bg-[#4b4b4b]', shade === 'b' && 'bg-[#454545]', shade === 'sel' && 'bg-[#636363]', c)}>
      {children}
    </div>
  );
}

const Visibility = () => (
  <div className="ml-auto flex items-center gap-[9px] pr-[19px]">
    <Eye />
    <RenderCam />
  </div>
);

function Outliner() {
  return (
    <div className="relative flex h-[306px] shrink-0 flex-col overflow-hidden rounded-t-[5px] bg-[#484848]">
      <div className="flex h-[35px] shrink-0 items-center pl-[11px]">
        <Box c="w-[42px]">
          <Seg c="w-full gap-[1px]">
            <OutlinerTypeIcon />
            <Chevron />
          </Seg>
        </Box>
        <Box c="ml-[7px] w-[42px]">
          <Seg c="w-full gap-[1px]">
            <ViewLayerIcon s={20} />
            <Chevron />
          </Seg>
        </Box>
        <div className="ml-[23px] flex h-[26px] w-[154px] shrink-0 items-center rounded-[5px] border border-[#222222] bg-[#2f2f2f] pl-[5px]">
          <SearchIcon />
        </div>
        <div className="ml-[22px] flex h-[26px] w-[40px] shrink-0 items-center rounded-[5px] border border-[#1f1f1f] bg-[#545454] pl-[4px]">
          <FilterIcon />
        </div>
      </div>
      <div className="flex flex-1 flex-col">
        <OutRow shade="b" c="bg-[#484848]">
          <BoxIcon s={20} c="ml-[29px] text-[#d2d2d2]" />
          <span className="ml-[8px] mt-[3px]">Scene Collection</span>
        </OutRow>
        <OutRow shade="a">
          <span className="ml-[34px] h-0 w-0 border-x-[4px] border-t-[7px] border-x-transparent border-t-[#c0c0c0]" />
          <span className="ml-[10px] flex h-[27px] w-[27px] items-center justify-center rounded-[5px] border border-[#7a7a7a] bg-[#5f5f5f]">
            <BoxIcon s={19} c="text-[#d8d8d8]" />
          </span>
          <span className="ml-[5px] mt-[3px]">Collection</span>
          <span className="ml-auto mr-[9px] flex h-[16px] w-[16px] items-center justify-center rounded-[2px] bg-[#d2d2d2]">
            <svg width="11" height="11" viewBox="0 0 11 11" fill="none" stroke="#222" strokeWidth="1.800">
              <path d="M1 6l3 3 6-7.500" />
            </svg>
          </span>
          <div className="flex items-center gap-[9px] pr-[19px]">
            <Eye />
            <RenderCam />
          </div>
        </OutRow>
        <OutRow shade="b">
          <span className="ml-[61px] h-0 w-0 border-y-[4px] border-l-[7px] border-y-transparent border-l-[#a8a8a8]" />
          <span className="ml-[14px]">
            <CameraFigure color="#ec8a37" s={20} />
          </span>
          <span className="ml-[9px] mt-[3px] w-[85px]">Camera</span>
          <span className="flex h-[26px] w-[27px] items-center justify-center rounded-[5px] border border-[#7a7a7a] bg-[#5f5f5f]">
            <svg width="20" height="20" viewBox="0 0 16 16" fill="none" stroke="#6ab86f" strokeWidth="1">
              <circle cx="5" cy="4" r="2.800" />
              <circle cx="11" cy="4" r="2.800" />
              <rect x="3.500" y="8" width="8.500" height="6" />
              <path d="M12 11l3-2v5l-3-2zM3.500 10L1 14" />
            </svg>
          </span>
          <Visibility />
        </OutRow>
        <OutRow shade="sel">
          <span className="ml-[61px] h-0 w-0 border-y-[4px] border-l-[7px] border-y-transparent border-l-[#b0b0b0]" />
          <span className="ml-[11px] flex h-[27px] w-[27px] items-center justify-center rounded-[5px] border border-[#8a8a8a] bg-[#707070]">
            <CylinderGlyph color="#f09a50" />
          </span>
          <span className="ml-[5px] mt-[3px] w-[88px] text-[#ffff00]">Cylinder</span>
          <MeshData />
          <Visibility />
        </OutRow>
        <OutRow shade="b">
          <span className="ml-[61px] h-0 w-0 border-y-[4px] border-l-[7px] border-y-transparent border-l-[#a8a8a8]" />
          <span className="ml-[14px]">
            <Bulb />
          </span>
          <span className="ml-[9px] mt-[3px] w-[65px]">Light</span>
          <LightData />
          <Visibility />
        </OutRow>
        <OutRow shade="a" />
        <OutRow shade="b" />
        <OutRow shade="a" />
        <OutRow shade="b" />
        <OutRow shade="a" />
      </div>
      <span className="absolute left-[38px] top-[95px] h-[66px] w-px bg-[#666666]" />
    </div>
  );
}

function PropTab({ active, c, children }: { active?: boolean; c?: string; children: ReactNode }) {
  return (
    <div className={cx('flex h-[37px] w-[35px] items-center justify-center border-y border-l border-[#222222]', active ? 'bg-[#5a5a5a]' : 'bg-[#2c2c2c]', c)}>
      {children}
    </div>
  );
}

function PropStack({ rows }: { rows: [string, string][] }) {
  return (
    <div className="flex flex-col">
      {rows.map(([label, value], i) => (
        <div key={i} className="flex h-[26.400px] items-center">
          <span className="w-[94px] shrink-0 text-right text-[#c4c4c4]">{label}</span>
          <span
            className={cx(
              'ml-[13px] flex h-full w-[101px] shrink-0 items-center justify-center border-x border-t border-[#1f1f1f] bg-[#303030] text-[#d6d6d6]',
              i === 0 && 'rounded-tl-[9px]',
              i === rows.length - 1 && 'rounded-bl-[9px] border-b',
            )}
          >
            {value}
          </span>
          <span className="ml-[3px] shrink-0">
            <Lock />
          </span>
          <span className="ml-[14px] shrink-0">
            <Dot />
          </span>
        </div>
      ))}
    </div>
  );
}

function Panel({ label, last }: { label: string; last?: boolean }) {
  return (
    <div className={cx('flex h-[33px] shrink-0 items-center rounded-[5px] bg-[#666666] pl-[11px] pr-[9px] text-[#d8d8d8]', last && 'rounded-b-none')}>
      <ChevRight c="text-[#c0c0c0]" />
      <span className="ml-[11px] flex-1">{label}</span>
      <Grip />
    </div>
  );
}

function Properties() {
  return (
    <div className="relative flex h-[647px] shrink-0 flex-col overflow-hidden rounded-[5px] bg-[#484848]">
      <div className="flex h-[36px] shrink-0 items-center pl-[10px]">
        <Box c="w-[42px]">
          <Seg c="w-full gap-[1px]">
            <PropsTypeIcon />
            <Chevron />
          </Seg>
        </Box>
        <div className="ml-[36px] flex h-[26px] w-[155px] shrink-0 items-center rounded-[5px] border border-[#222222] bg-[#2f2f2f] pl-[5px]">
          <SearchIcon />
        </div>
        <Box c="ml-[50px] w-[27px]">
          <Seg c="w-full">
            <Chevron />
          </Seg>
        </Box>
      </div>
      <div className="flex flex-1 overflow-hidden">
        <div className="flex w-[37px] shrink-0 flex-col items-end pt-[9px]">
          <PropTab c="rounded-l-[7px]">
            <TabTool />
          </PropTab>
          <div className="mt-[11px]">
            <PropTab c="rounded-tl-[7px]">
              <TabRender />
            </PropTab>
            <PropTab>
              <TabOutput />
            </PropTab>
            <PropTab>
              <ViewLayerIcon s={22} c="text-[#e4e4e4]" />
            </PropTab>
            <PropTab>
              <SceneIcon s={22} c="text-[#e4e4e4]" />
            </PropTab>
            <PropTab c="rounded-bl-[7px]">
              <TabWorld />
            </PropTab>
          </div>
          <div className="mt-[11px]">
            <PropTab c="rounded-l-[7px]">
              <BoxIcon s={20} c="text-[#e4e4e4]" />
            </PropTab>
          </div>
          <div className="mt-[11px]">
            <PropTab active c="rounded-tl-[7px]">
              <ObjectIcon s={22} c="text-[#f7a253]" />
            </PropTab>
            <PropTab>
              <TabModifier />
            </PropTab>
            <PropTab>
              <TabParticles />
            </PropTab>
            <PropTab>
              <TabPhysics />
            </PropTab>
            <PropTab>
              <TabConstraint />
            </PropTab>
            <PropTab>
              <MeshData s={22} />
            </PropTab>
            <PropTab c="rounded-bl-[7px]">
              <TabMaterial />
            </PropTab>
          </div>
          <div className="mt-[11px]">
            <PropTab c="rounded-l-[7px]">
              <TabTexture />
            </PropTab>
          </div>
        </div>
        <div className="flex min-w-0 flex-1 flex-col pl-[11px] pr-[11px]">
          <div className="mt-[9px] flex h-[24px] shrink-0 items-center pl-[3px] pr-[3px]">
            <ObjectIcon s={20} c="text-[#c8c8c8]" />
            <span className="ml-[12px] flex-1 text-[#c8c8c8]">Cylinder</span>
            <PinIcon c="text-[#a8a8a8]" />
          </div>
          <Box c="mt-[24px] w-full bg-[#2f2f2f]">
            <Seg c="w-[41px] gap-[1px] bg-[#555555]">
              <ObjectIcon s={20} />
              <Chevron />
            </Seg>
            <span className="flex flex-1 items-center pl-[10px] text-[#d6d6d6]">Cylinder</span>
          </Box>
          <div className="mt-[13px] flex h-[33px] shrink-0 items-center rounded-t-[5px] bg-[#666666] pl-[11px] pr-[9px] text-[14.500px] text-[#d8d8d8]">
            <ChevDown c="text-[#c0c0c0]" />
            <span className="ml-[7px] flex-1">Transform</span>
            <Grip />
          </div>
          <div className="mt-[11px]">
            <PropStack rows={[['Location X', '0 m'], ['Y', '0 m'], ['Z', '0 m']]} />
          </div>
          <div className="mt-[8px]">
            <PropStack rows={[['Rotation X', '0°'], ['Y', '0°'], ['Z', '0°']]} />
          </div>
          <div className="mt-[8px] flex h-[26px] shrink-0 items-center">
            <span className="w-[94px] text-right text-[#c4c4c4]">Mode</span>
            <span className="ml-[13px] flex h-full w-[101px] items-center justify-between rounded-[5px] border border-[#222222] bg-[#585858] pl-[10px] pr-[3px] text-[#dcdcdc]">
              XYZ Euler
              <Chevron />
            </span>
            <span className="ml-[37px]">
              <Dot />
            </span>
          </div>
          <div className="mt-[6.500px]">
            <PropStack rows={[['Scale X', '1.000'], ['Y', '1.000'], ['Z', '1.000']]} />
          </div>
          <div className="flex h-[48.500px] shrink-0 items-center pl-[32px] pt-[8px] text-[14.500px] text-[#d2d2d2]">
            <ChevRight c="text-[#c0c0c0]" />
            <span className="ml-[6px]">Delta Transform</span>
          </div>
          <div className="flex flex-col gap-[3px]">
            <Panel label="Relations" />
            <Panel label="Collections" />
            <Panel label="Instancing" />
            <Panel label="Motion Paths" last />
          </div>
        </div>
      </div>
      <span className="absolute bottom-[30px] right-[2px] top-[46px] w-[3px] rounded-full bg-[#555555]" />
    </div>
  );
}

function StatusBar() {
  return (
    <div className="relative flex h-[24px] shrink-0 items-center rounded-br-[8px] bg-[#424242] pb-[2px]">
      <span className="ml-[15px]">
        <Mouse zone="left" />
      </span>
      <span className="ml-[15px] w-[295px]">Select (Toggle)</span>
      <Mouse zone="middle" />
      <span className="ml-[14px] w-[297px]">Dolly View</span>
      <Mouse zone="right" />
      <span className="ml-[14px]">Lasso Select</span>
      <span className="ml-auto pr-[16px] text-[#c4c4c4]">3.6.3</span>
    </div>
  );
}

export default function App() {
  return (
    <div className="relative flex h-[1019px] w-[1920px] flex-col overflow-hidden bg-[#2a2a2a] font-['DejaVu_Sans',sans-serif] text-[14px] leading-none text-[#d2d2d2]">
      <span className="absolute bottom-0 right-0 h-[8px] w-[8px] bg-[#7fb04a]" />
      <TopBar />
      <div className="flex flex-1 gap-[5px] pb-[1px] pt-[3px]">
        <div className="flex w-[1584px] shrink-0 flex-col gap-[5px]">
          <Viewport />
          <Timeline />
        </div>
        <div className="flex min-w-0 flex-1 flex-col gap-[4px]">
          <Outliner />
          <Properties />
        </div>
      </div>
      <StatusBar />
    </div>
  );
}
